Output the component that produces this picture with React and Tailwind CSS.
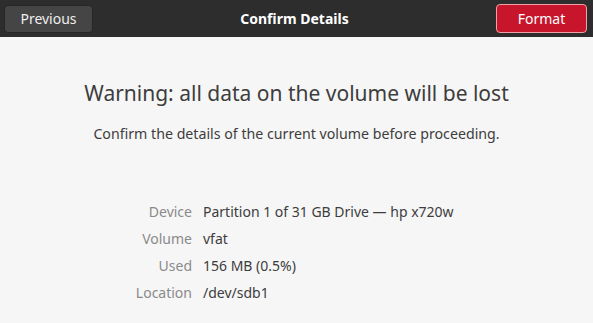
import React from 'react';

const rows = [
  ['Device', 'Partition 1 of 31 GB Drive — hp x720w'],
  ['Volume', 'vfat'],
  ['Used', '156 MB (0.5%)'],
  ['Location', '/dev/sdb1'],
];

export default function App() {
  return (
    <div className="w-[593px] h-[323px] flex flex-col bg-[#f6f6f6] overflow-hidden" style={{ fontFamily: '"Noto Sans", sans-serif' }}>
      {/* header bar */}
      <div className="h-[37px] bg-[#2d2d2d] flex items-center justify-between px-1 shrink-0">
        <button className="w-[89px] h-[28px] rounded-[4px] bg-[#454545] border border-[#262626] text-[#eeeeee] text-[14px]">
          Previous
        </button>
        <div className="text-white font-bold text-[14px]">Confirm Details</div>
        <button className="w-[91px] h-[29px] rounded-[4px] bg-[#c7162b] border border-[#f0a0a8] text-white text-[14px] mr-[2px]">
          Format
        </button>
      </div>

      {/* body */}
      <div className="flex flex-col items-center pt-[41px]">
        <h1 className="text-[21px] text-[#3d3d3d] leading-[30px]">Warning: all data on the volume will be lost</h1>
        <p className="mt-[16px] text-[14.2px] text-[#3d3d3d] leading-[20px]">
          Confirm the details of the current volume before proceeding.
        </p>
      </div>

      <div className="mt-[58px] grid grid-cols-[192px_1fr] gap-x-[11px] gap-y-[7px] text-[14px] leading-[20px]">
        {rows.map(([k, v]) => (
          <React.Fragment key={k}>
            <div className="text-right text-[#8a8a8a]">{k}</div>
            <div className="text-[#3d3d3d]">{v}</div>
          </React.Fragment>
        ))}
      </div>
    </div>
  );
}
